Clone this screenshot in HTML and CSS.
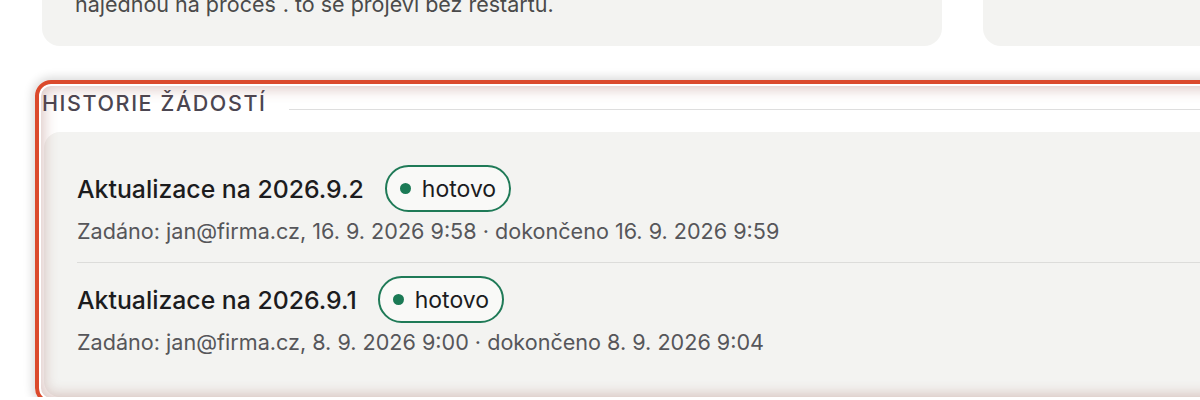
FILE: index.html
```html
<!DOCTYPE html>
<html lang="cs">
<head>
<meta charset="utf-8">
<title>Historie žádostí</title>
<link rel="stylesheet" href="styles.css">
</head>
<body>
<div class="page">
  <div class="top-row">
    <div class="card">
      <p class="card-text">najednou na proces`. to se projeví bez restartu.</p>
    </div>
    <div class="card"></div>
  </div>

  <section class="history">
    <div class="history-head">
      <h2 class="history-title">Historie žádostí</h2>
      <span class="history-rule"></span>
    </div>
    <div class="panel">
      <div class="item">
        <div class="item-head">
          <span class="item-title">Aktualizace na 2026.9.2</span>
          <span class="badge"><span class="badge-dot"></span>hotovo</span>
        </div>
        <div class="item-meta">Zadáno: jan@firma.cz, 16. 9. 2026 9:58 · dokončeno 16. 9. 2026 9:59</div>
      </div>
      <div class="item">
        <div class="item-head">
          <span class="item-title">Aktualizace na 2026.9.1</span>
          <span class="badge"><span class="badge-dot"></span>hotovo</span>
        </div>
        <div class="item-meta">Zadáno: jan@firma.cz, 8. 9. 2026 9:00 · dokončeno 8. 9. 2026 9:04</div>
      </div>
    </div>
    <div class="highlight"></div>
  </section>
</div>
</body>
</html>
```

FILE: styles.css
```css
* { box-sizing: border-box; }

html, body {
  margin: 0;
  padding: 0;
  background: #ffffff;
  overflow: hidden;
}

body {
  font-family: Inter, "Noto Sans", "DejaVu Sans", sans-serif;
  color: #1d1d1f;
}

.page {
  width: 1500px;
  padding: 1px 0 0 42px;
}

.top-row {
  display: grid;
  grid-template-columns: 900px 1fr;
  column-gap: 41px;
  margin-top: -35px;
}

.card {
  height: 80px;
  background: #f3f3f1;
  border-radius: 18px;
  display: flex;
  align-items: flex-end;
  padding: 0 33px 27px;
}

.card-text {
  margin: 0;
  font-size: 21.5px;
  line-height: 30px;
  color: #4a4a4a;
}

.history {
  position: relative;
  margin-top: 41px;
  height: 310px;
  display: flex;
  flex-direction: column;
}

.history-head {
  display: flex;
  align-items: flex-end;
  gap: 22px;
}

.history-title {
  margin: 0;
  font-size: 21.5px;
  line-height: 26px;
  font-weight: 500;
  letter-spacing: 1.6px;
  text-transform: uppercase;
  color: #4b4651;
  padding-top: 3px;
}

.history-rule {
  flex: 1;
  height: 1px;
  background: #dedede;
  margin-bottom: 6px;
}

.panel {
  margin-top: 16px;
  margin-left: 2px;
  flex: 1;
  background: #f3f3f1;
  border-radius: 16px;
  padding: 24px 33px 0;
}

.item {
  padding: 9px 0 17px;
}

.item + .item {
  border-top: 1px solid #dcdcda;
  padding-top: 13px;
}

.item-head {
  display: flex;
  align-items: center;
  gap: 21px;
}

.item-title {
  font-size: 24.8px;
  font-weight: 500;
  color: #1c1c1e;
  line-height: 30px;
}

.badge {
  display: inline-flex;
  align-items: center;
  gap: 11px;
  height: 47px;
  padding: 0 13px 0 13px;
  border: 2px solid #1f7a57;
  border-radius: 24px;
  background: #f9f9f7;
  font-size: 23px;
  color: #1c1c1e;
}

.badge-dot {
  width: 11px;
  height: 11px;
  border-radius: 50%;
  background: #1b7a55;
}

.item-meta {
  margin-top: 5px;
  font-size: 21.6px;
  line-height: 28px;
  color: #56565a;
}

.highlight {
  position: absolute;
  top: -7px;
  left: -7px;
  right: -7px;
  bottom: -7px;
  border: 4px solid #db4a2c;
  border-radius: 16px;
  pointer-events: none;
  box-shadow:
    0 0 10px 3px rgba(0, 0, 0, 0.14),
    inset 0 0 0 2px #ffffff,
    inset 0 0 14px 5px rgba(150, 80, 70, 0.32);
}
```
